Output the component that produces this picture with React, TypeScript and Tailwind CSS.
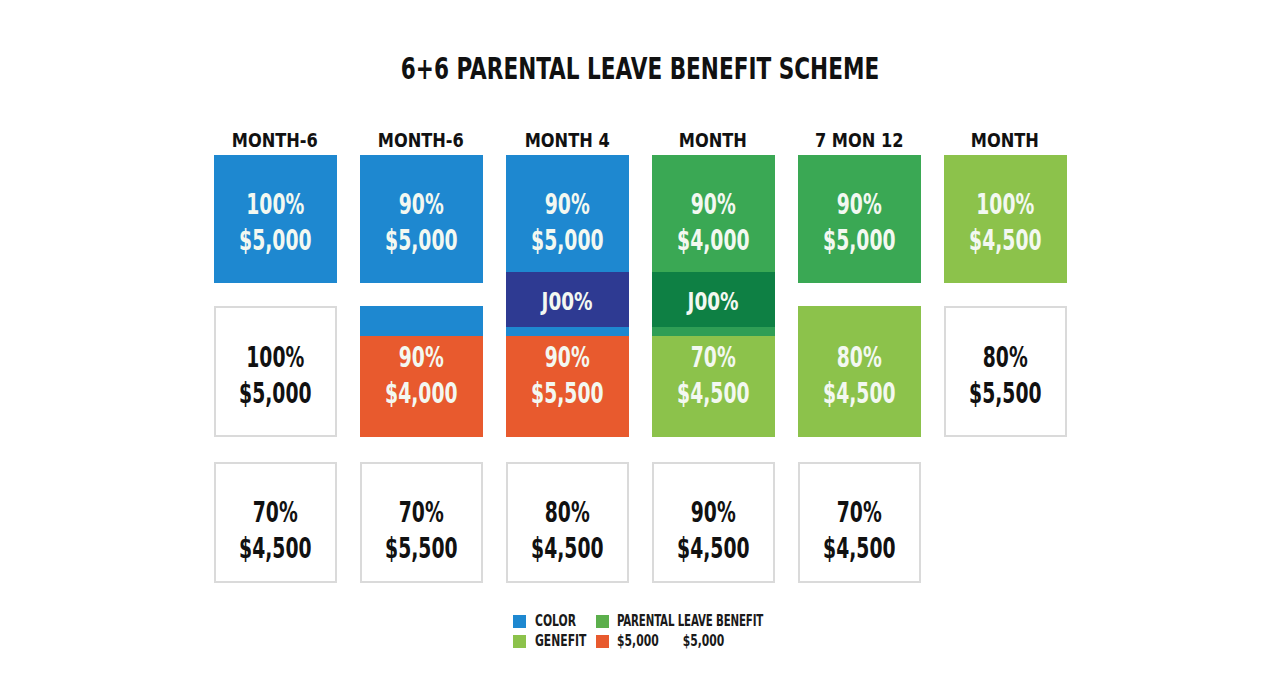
import React from 'react';

type Seg = { h: string; bg: string; pct?: string; amt?: string; dark?: boolean; pt?: string };
type Blk = { mt: string; segs: Seg[] };

const FONT = "font-['DejaVu_Sans_Condensed','Roboto',sans-serif]";

const BLUE = 'bg-[#1e88d0]';
const NAVY = 'bg-[#2e3a92]';
const GREEN = 'bg-[#3aa854]';
const DKGREEN = 'bg-[#0e8044]';
const LIME = 'bg-[#8cc24b]';
const ORANGE = 'bg-[#e85a2e]';

const headers = ['MONTH-6', 'MONTH-6', 'MONTH 4', 'MONTH', '7 MON 12', 'MONTH'];

const ROW2 = 'mt-[23px]';
const ROW3 = 'mt-[25px]';

// each column: stacked blocks, each block a list of segments
const columns: Blk[][] = [
  [
    { mt: '', segs: [{ h: 'h-[128px]', bg: BLUE, pct: '100%', amt: '$5,000', pt: 'pt-[31px]' }] },
    { mt: ROW2, segs: [{ h: 'h-[131px]', bg: 'bg-white', pct: '100%', amt: '$5,000', dark: true, pt: 'pt-[31px]' }] },
    { mt: ROW3, segs: [{ h: 'h-[121px]', bg: 'bg-white', pct: '70%', amt: '$4,500', dark: true, pt: 'pt-[30px]' }] },
  ],
  [
    { mt: '', segs: [{ h: 'h-[128px]', bg: BLUE, pct: '90%', amt: '$5,000', pt: 'pt-[31px]' }] },
    {
      mt: ROW2,
      segs: [
        { h: 'h-[30px]', bg: BLUE },
        { h: 'h-[101px]', bg: ORANGE, pct: '90%', amt: '$4,000', pt: 'pt-[3px]' },
      ],
    },
    { mt: ROW3, segs: [{ h: 'h-[121px]', bg: 'bg-white', pct: '70%', amt: '$5,500', dark: true, pt: 'pt-[30px]' }] },
  ],
  [
    {
      mt: '',
      segs: [
        { h: 'h-[117px]', bg: BLUE, pct: '90%', amt: '$5,000', pt: 'pt-[31px]' },
        { h: 'h-[55px]', bg: NAVY, pct: 'J00%' },
        { h: 'h-[9px]', bg: BLUE },
        { h: 'h-[101px]', bg: ORANGE, pct: '90%', amt: '$5,500', pt: 'pt-[3px]' },
      ],
    },
    { mt: ROW3, segs: [{ h: 'h-[121px]', bg: 'bg-white', pct: '80%', amt: '$4,500', dark: true, pt: 'pt-[30px]' }] },
  ],
  [
    {
      mt: '',
      segs: [
        { h: 'h-[117px]', bg: GREEN, pct: '90%', amt: '$4,000', pt: 'pt-[31px]' },
        { h: 'h-[55px]', bg: DKGREEN, pct: 'J00%' },
        { h: 'h-[9px]', bg: 'bg-[#2f9e55]' },
        { h: 'h-[101px]', bg: LIME, pct: '70%', amt: '$4,500', pt: 'pt-[3px]' },
      ],
    },
    { mt: ROW3, segs: [{ h: 'h-[121px]', bg: 'bg-white', pct: '90%', amt: '$4,500', dark: true, pt: 'pt-[30px]' }] },
  ],
  [
    { mt: '', segs: [{ h: 'h-[128px]', bg: GREEN, pct: '90%', amt: '$5,000', pt: 'pt-[31px]' }] },
    { mt: ROW2, segs: [{ h: 'h-[131px]', bg: LIME, pct: '80%', amt: '$4,500', pt: 'pt-[33px]' }] },
    { mt: ROW3, segs: [{ h: 'h-[121px]', bg: 'bg-white', pct: '70%', amt: '$4,500', dark: true, pt: 'pt-[30px]' }] },
  ],
  [
    { mt: '', segs: [{ h: 'h-[128px]', bg: LIME, pct: '100%', amt: '$4,500', pt: 'pt-[31px]' }] },
    { mt: ROW2, segs: [{ h: 'h-[131px]', bg: 'bg-white', pct: '80%', amt: '$5,500', dark: true, pt: 'pt-[31px]' }] },
  ],
];

const Block: React.FC<{ segs: Seg[]; className?: string }> = ({ segs, className = '' }) => (
  <div className={`flex flex-col shrink-0 ${className}`}>
    {segs.map((s, i) => (
      <div
        key={i}
        className={`${s.h} shrink-0 overflow-hidden ${s.bg} ${s.dark ? 'border-2 border-[#dadada] text-[#111]' : 'text-[#f3f8f1]'} ${
          s.amt ? `justify-start ${s.pt}` : 'justify-center'
        } flex flex-col items-center font-bold`}
      >
        {s.pct && (
          <span
            className={
              s.amt
                ? 'text-[29px] leading-[36px] scale-x-[0.72]'
                : 'text-[25px] leading-[30px] scale-x-[0.82] pt-[4px]'
            }
          >
            {s.pct}
          </span>
        )}
        {s.amt && <span className="text-[29px] leading-[36px] scale-x-[0.72]">{s.amt}</span>}
      </div>
    ))}
  </div>
);

const Swatch: React.FC<{ bg: string }> = ({ bg }) => <span className={`w-[13px] h-[13px] shrink-0 ${bg}`} />;

const Legend: React.FC = () => (
  <div className="mt-[32px] pl-[513px] grid grid-cols-[83px_auto] gap-y-[7px] text-[15px] font-bold text-[#1a1a1a] leading-[13px]">
    <div className="flex items-center gap-[9px]">
      <Swatch bg={BLUE} />
      <span className="origin-left scale-x-[0.8] whitespace-nowrap">COLOR</span>
    </div>
    <div className="flex items-center gap-[8px]">
      <Swatch bg="bg-[#5caf4c]" />
      <span className="origin-left scale-x-[0.76] whitespace-nowrap tracking-[-0.2px]">PARENTAL LEAVE BENEFIT</span>
    </div>
    <div className="flex items-center gap-[9px]">
      <Swatch bg={LIME} />
      <span className="origin-left scale-x-[0.8] whitespace-nowrap">GENEFIT</span>
    </div>
    <div className="flex items-center gap-[8px]">
      <Swatch bg={ORANGE} />
      <span className="origin-left scale-x-[0.8] whitespace-nowrap">
        $5,000<span className="ml-[30px]">$5,000</span>
      </span>
    </div>
  </div>
);

export default function App() {
  return (
    <div className={`w-[1280px] h-[698px] bg-white ${FONT} overflow-hidden`}>
      <div className="pt-[51px] flex justify-center">
        <h1 className="text-[30px] font-bold text-[#111] leading-[36px] whitespace-nowrap scale-x-[0.8]">
          6+6 PARENTAL LEAVE BENEFIT SCHEME
        </h1>
      </div>

      <div className="mt-[32px] mx-auto w-[853px] grid grid-cols-6 gap-x-[23px] items-start">
        {columns.map((col, ci) => (
          <div key={ci} className="flex flex-col">
            <div className="h-[36px] pt-[9px] flex justify-center">
              <span className="text-[20px] font-bold text-[#111] leading-[24px] whitespace-nowrap scale-x-[0.9]">
                {headers[ci]}
              </span>
            </div>
            <div className="flex flex-col">
              {col.map((b, ri) => (
                <Block key={ri} segs={b.segs} className={b.mt} />
              ))}
            </div>
          </div>
        ))}
      </div>

      <Legend />
    </div>
  );
}
